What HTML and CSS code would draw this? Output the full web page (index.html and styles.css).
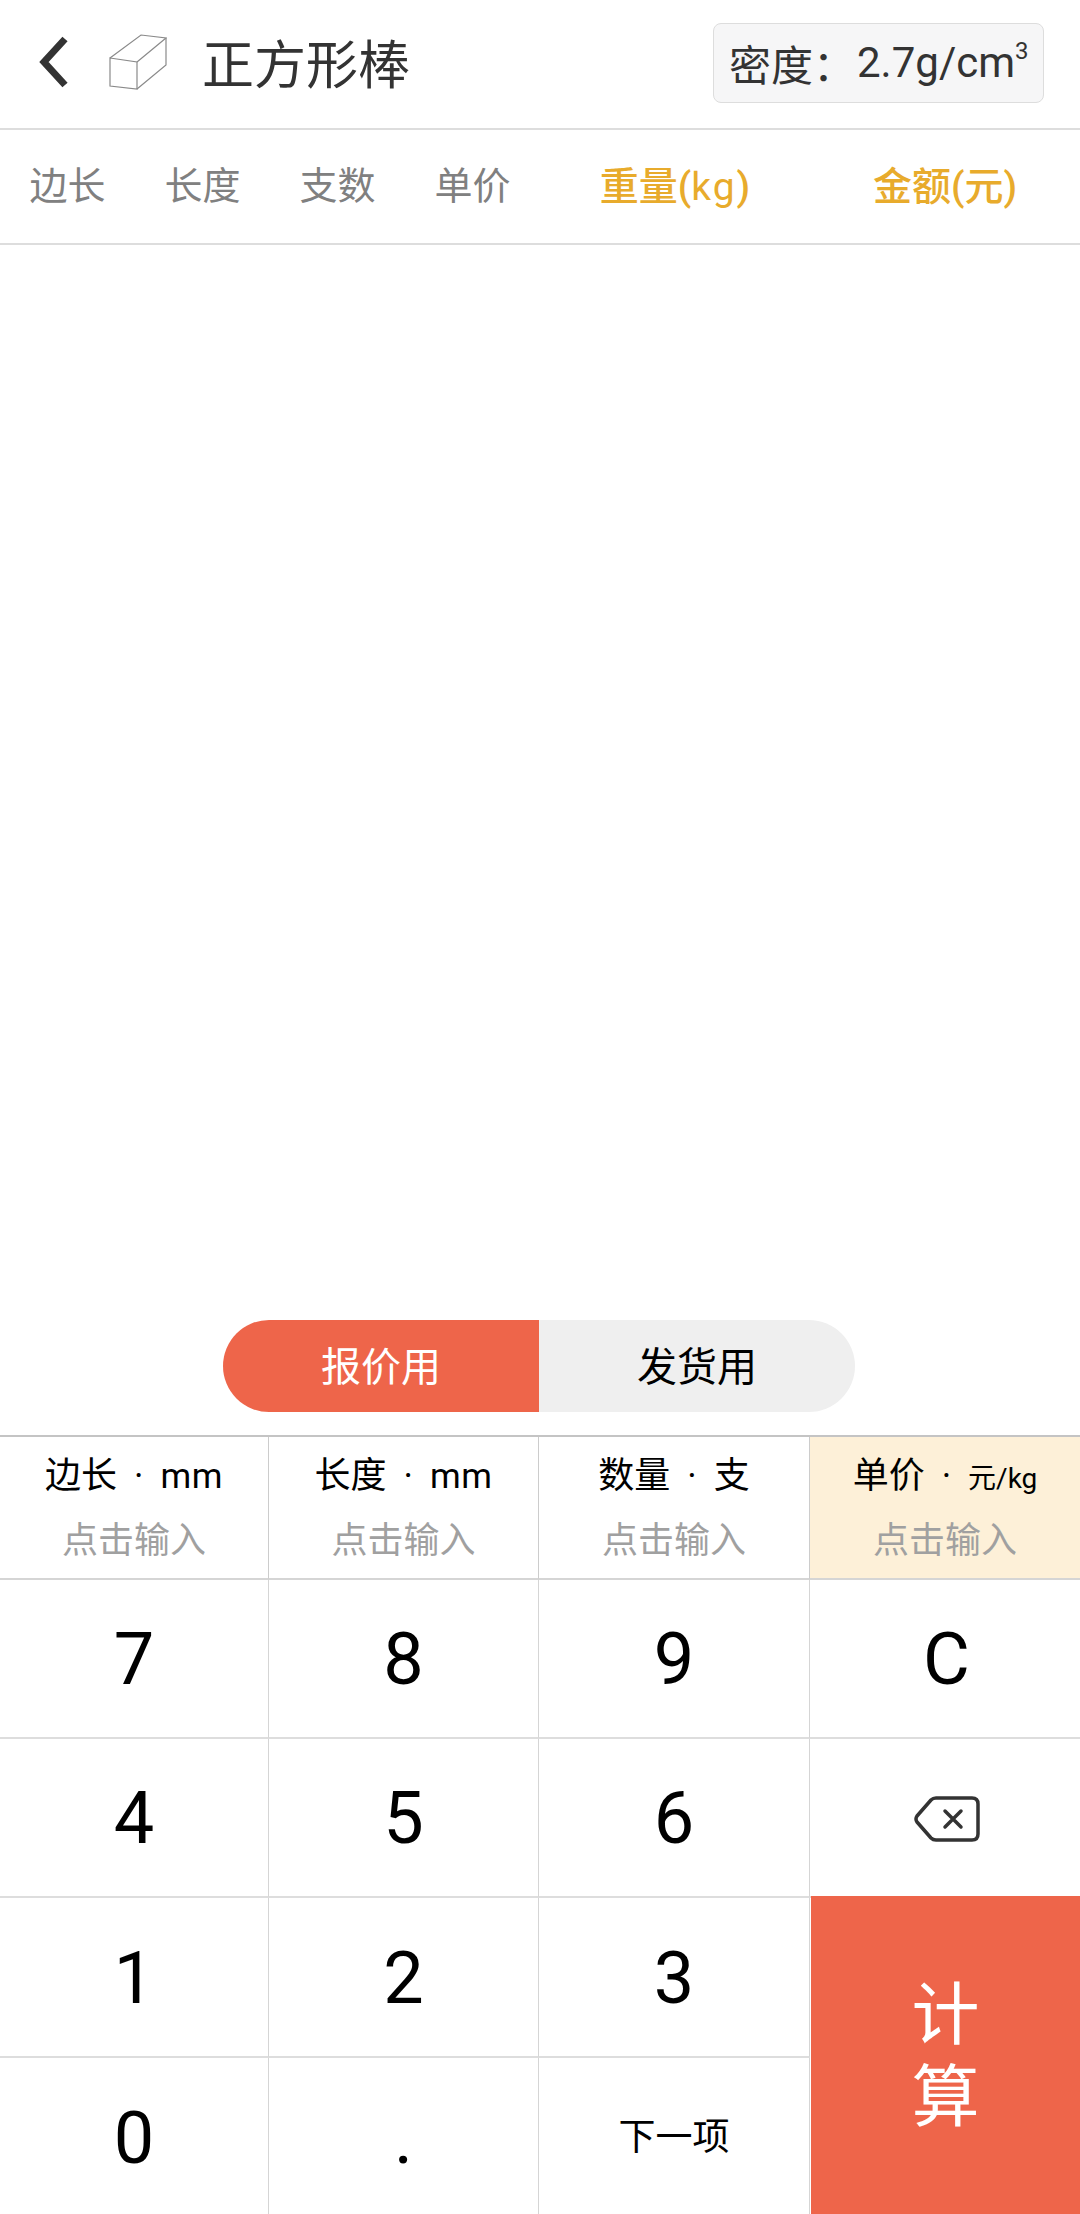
FILE: index.html
```html
<!DOCTYPE html>
<html lang="zh-CN">
<head>
<meta charset="utf-8" />
<title>正方形棒</title>
<link rel="stylesheet" href="styles.css">
</head>
<body>
<div class="page">
  <div class="header">
    <svg class="back" width="30" height="52" viewBox="0 0 30 52"><path d="M26 3 L5 26 L26 49" fill="none" stroke="#333" stroke-width="7"/></svg>
    <svg class="bar-icon" width="58" height="56" viewBox="0 0 58 56" fill="none" stroke="#8a8a8a" stroke-width="1.2">
      <path d="M1 24 L28 28 L28 55 L1 52 Z"/>
      <path d="M1 24 L32 1 L57 4 L28 28"/>
      <path d="M57 4 L57 31 L28 55"/>
    </svg>
    <div class="title">正方形棒</div>
    <div class="density">密度：<span class="num">2.7g/cm<sup>3</sup></span></div>
  </div>

  <div class="tabs">
    <div>边长</div>
    <div>长度</div>
    <div>支数</div>
    <div>单价</div>
    <div class="result">重量(<span class="kg">kg</span>)</div>
    <div class="result">金额(元)</div>
  </div>

  <div class="list"></div>

  <div class="toggle">
    <div class="toggle-on">报价用</div>
    <div class="toggle-off">发货用</div>
  </div>

  <div class="keypad">
    <div class="field"><p>边长<i>·</i><span class="unit">mm</span></p><p class="hint">点击输入</p></div>
    <div class="field"><p>长度<i>·</i><span class="unit">mm</span></p><p class="hint">点击输入</p></div>
    <div class="field"><p>数量<i>·</i>支</p><p class="hint">点击输入</p></div>
    <div class="field active"><p>单价<i>·</i><span class="unit small">元/kg</span></p><p class="hint">点击输入</p></div>

    <div class="key">7</div>
    <div class="key">8</div>
    <div class="key">9</div>
    <div class="key last">C</div>

    <div class="key">4</div>
    <div class="key">5</div>
    <div class="key">6</div>
    <div class="key last">
      <svg width="66" height="46" viewBox="0 0 66 46" fill="none" stroke="#333" stroke-width="3.5" stroke-linejoin="round" stroke-linecap="round">
        <path d="M22 2 L58 2 Q64 2 64 8 L64 38 Q64 44 58 44 L22 44 Q19 44 17 42 L3 26 Q1 23 3 20 L17 4 Q19 2 22 2 Z"/>
        <path d="M31 15 L47 31 M47 15 L31 31"/>
      </svg>
    </div>

    <div class="key">1</div>
    <div class="key">2</div>
    <div class="key">3</div>
    <div class="calc">计<br>算</div>

    <div class="key">0</div>
    <div class="key">.</div>
    <div class="key next">下一项</div>
  </div>
</div>
</body>
</html>
```

FILE: styles.css
```css
body{
margin:0;
background-color:#fff;
font-family:Roboto,"Noto Sans CJK SC",sans-serif;
}
.page{
width:1080px;
height:2214px;
display:flex;
flex-direction:column;
overflow:hidden;
}
.header{
box-sizing:border-box;
height:130px;
padding-bottom:4px;
display:flex;
align-items:center;
border-bottom:2px solid #ddd;
flex-shrink:0;
}
.back{
margin-left:39px;
}
.bar-icon{
margin-left:40px;
}
.title{
margin-left:35px;
padding-bottom:2px;
font-size:52px;
color:#333;
}
.density{
margin:2px 36px 0 auto;
width:331px;
height:80px;
box-sizing:border-box;
padding:0 0 2px 15px;
display:flex;
align-items:center;
background-color:#f6f6f7;
border:1px solid #ddd;
border-radius:8px;
font-size:42px;
color:#333;
white-space:nowrap;
}
.num{
margin-left:2px;
}
sup{
font-size:24px;
line-height:0;
vertical-align:18px;
}
.tabs{
box-sizing:border-box;
height:115px;
padding-bottom:8px;
display:grid;
grid-template-columns:135px 135px 135px 135px 270px 270px;
align-items:center;
text-align:center;
font-size:38px;
color:#808080;
border-bottom:2px solid #ddd;
flex-shrink:0;
}
.result{
color:#e8ab2c;
font-size:39px;
font-weight:500;
}
.kg{
font-weight:400;
letter-spacing:2px;
}
.list{
flex:1;
}
.toggle{
display:flex;
margin:0 auto 23px 223px;
height:92px;
font-size:40px;
}
.toggle-on,.toggle-off{
width:316px;
box-sizing:border-box;
padding-bottom:4px;
display:flex;
align-items:center;
justify-content:center;
}
.toggle-on{
background-color:#ee654a;
color:#fff;
border-radius:46px 0 0 46px;
}
.toggle-off{
background-color:#efefef;
color:#000;
border-radius:0 46px 46px 0;
}
.keypad{
display:grid;
grid-template-columns:269px 270px 271px 270px;
grid-template-rows:143px 159px 159px 160px 160px;
border-top:2px solid #c4c4c4;
margin-bottom:-4px;
flex-shrink:0;
}
.field{
box-sizing:border-box;
border-right:1px solid #ccc;
border-bottom:2px solid #d5d5d5;
text-align:center;
font-size:36px;
color:#000;
}
.field p{
margin:0;
height:52px;
line-height:52px;
margin-top:13px;
white-space:nowrap;
}
.field .hint{
margin-top:13px;
color:#a0a0a0;
}
.field i{
font-style:normal;
margin:0 17px;
}
.unit{
font-size:35px;
letter-spacing:0.5px;
}
.unit.small{
font-size:28px;
letter-spacing:0;
}
.active{
background-color:#fdf0d8;
border-right:0;
}
.key{
box-sizing:border-box;
padding-top:2px;
display:flex;
align-items:center;
justify-content:center;
border-right:1px solid #d5d5d5;
border-bottom:2px solid #ddd;
font-size:72px;
color:#000;
}
.last{
border-right:0;
padding-left:3px;
}
.next{
padding:0 0 6px;
font-size:37px;
}
.calc{
grid-row:span 2;
box-sizing:border-box;
margin:-2px 0 0 1px;
display:flex;
align-items:center;
justify-content:center;
text-align:center;
background-color:#ee654a;
color:#fff;
font-size:68px;
line-height:82px;
}
```
